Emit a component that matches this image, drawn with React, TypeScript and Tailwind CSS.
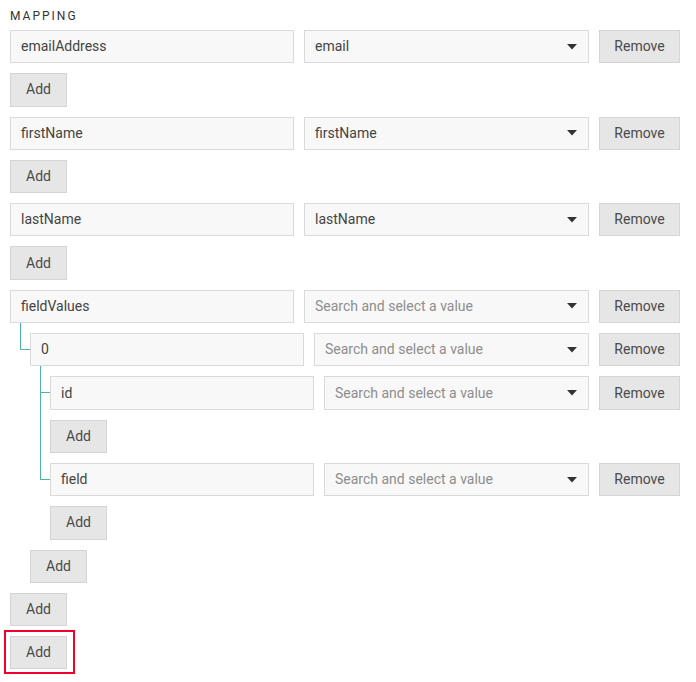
import React from "react";

type Node = { name: string; value?: string; children?: Node[] };

const data: Node[] = [
  { name: "emailAddress", value: "email" },
  { name: "firstName", value: "firstName" },
  { name: "lastName", value: "lastName" },
  {
    name: "fieldValues",
    children: [
      {
        name: "0",
        children: [{ name: "id" }, { name: "field" }],
      },
    ],
  },
];

function Caret() {
  return (
    <svg width="10" height="6" viewBox="0 0 10 6" className="shrink-0">
      <path d="M0 0 L10 0 L5 5.5 Z" fill="#333" />
    </svg>
  );
}

function AddButton() {
  return (
    <button className="w-[57px] h-[33.3px] bg-[#e6e6e6] border border-[#d5d5d5] text-[14px] text-[#4a4a4a]">
      Add
    </button>
  );
}

function Row({ node }: { node: Node }) {
  return (
    <div className="flex gap-[10px] h-[33.3px]">
      <div className="flex-1 min-w-0 h-full bg-[#f8f8f8] border border-[#dadada] flex items-center px-[10px] text-[14px] text-[#444]">
        {node.name}
      </div>
      <div className="flex-1 min-w-0 h-full bg-[#f8f8f8] border border-[#dadada] flex items-center justify-between pl-[10px] pr-[11px] text-[14px]">
        <span className={node.value ? "text-[#444]" : "text-[#8e8e8e]"}>
          {node.value ?? "Search and select a value"}
        </span>
        <Caret />
      </div>
      <button className="w-[81px] shrink-0 h-full bg-[#e6e6e6] border border-[#d5d5d5] text-[14px] text-[#4a4a4a]">
        Remove
      </button>
    </div>
  );
}

function Item({ node }: { node: Node }) {
  return (
    <div className="flex flex-col gap-[10px]">
      <Row node={node} />
      {node.children && (
        <div className="flex flex-col gap-[10px] pl-[20px]">
          {node.children.map((c, i) => (
            <div key={i} className="relative">
              <span className="absolute -left-[10px] -top-[10px] w-[10px] h-[27px] border-l border-b border-[#4fb5ab]" />
              {i < node.children!.length - 1 && (
                <span className="absolute -left-[10px] top-0 bottom-0 border-l border-[#4fb5ab]" />
              )}
              <Item node={c} />
            </div>
          ))}
        </div>
      )}
      <div>
        <AddButton />
      </div>
    </div>
  );
}

export default function App() {
  return (
    <div
      className="w-[696px] h-[682px] bg-white pl-[10px] pt-[9px]"
      style={{ fontFamily: "Roboto, 'Liberation Sans', sans-serif" }}
    >
      <div className="w-[670px]">
        <div className="text-[12px] tracking-[2px] text-[#333] leading-[14px] mb-[7px]">
          MAPPING
        </div>
        <div className="flex flex-col gap-[10px]">
          {data.map((n, i) => (
            <Item key={i} node={n} />
          ))}
          <div>
            <div className="relative inline-block">
              <span className="absolute -left-[6px] -right-[8px] -top-[6px] -bottom-[5px] border-2 border-[#f0002a]" />
              <AddButton />
            </div>
          </div>
        </div>
      </div>
    </div>
  );
}
